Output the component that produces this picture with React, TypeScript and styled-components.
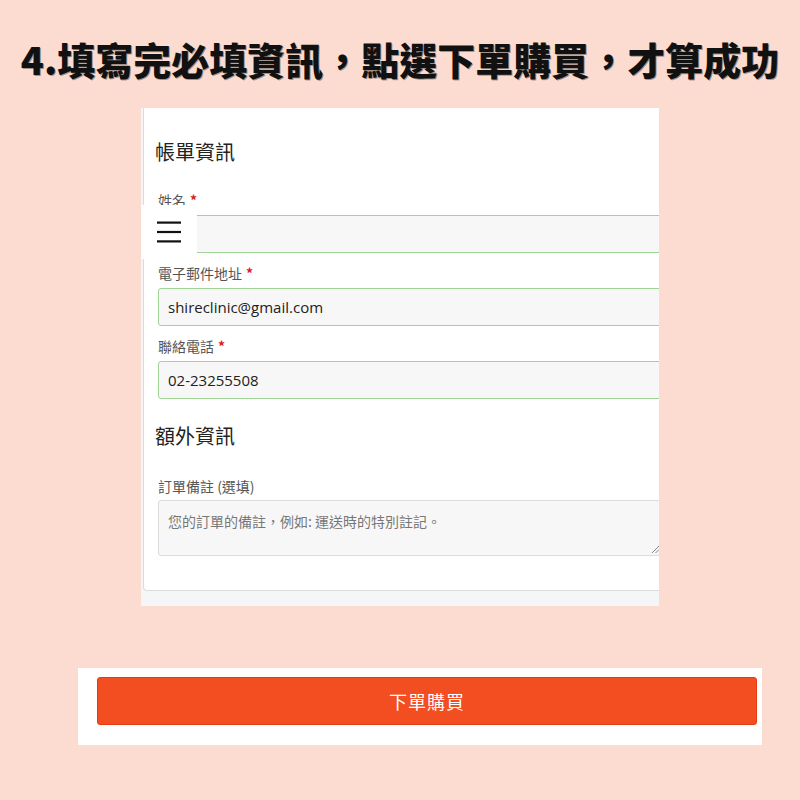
import React from 'react';
import styled, { createGlobalStyle } from 'styled-components';

const GlobalStyle = createGlobalStyle`
  html, body {
    margin: 0;
    padding: 0;
    background: #fcdcd0;
  }
  * {
    box-sizing: border-box;
  }
`

const Page = styled.div`
  width: 800px;
  height: 800px;
  display: flex;
  flex-direction: column;
  align-items: center;
  background: #fcdcd0;
  font-family: "Noto Sans CJK TC", "Noto Sans", sans-serif;
`

const Title = styled.h1`
  margin: 36px 0 0 0;
  height: 46px;
  line-height: 46px;
  font-size: 38px;
  font-weight: 900;
  color: #111;
  white-space: nowrap;
  text-shadow: 1px 1px 0 rgba(0, 0, 0, 0.35);
`

const Shot = styled.div`
  position: relative;
  margin-top: 26px;
  width: 518px;
  height: 498px;
  background: #f5f6f8;
  overflow: hidden;
`

const Card = styled.div`
  width: 524px;
  margin-left: 2px;
  padding: 30px 0 34px 11px;
  background: #fff;
  border-left: 1px solid #dcdcdc;
  border-bottom: 1px solid #dcdcdc;
  border-bottom-left-radius: 4px;
  display: flex;
  flex-direction: column;
`

const SectionTitle = styled.h2<{ $gap: number }>`
  margin: 0 0 ${p => p.$gap}px 0;
  font-size: 20px;
  line-height: 28px;
  font-weight: 400;
  color: #222;
`

const Field = styled.div`
  display: flex;
  flex-direction: column;
  gap: 5px;
  margin-bottom: 10px;
  padding-left: 3px;
`

const Label = styled.label`
  font-size: 14px;
  line-height: 20px;
  color: #555;
`

const Star = styled.span`
  color: #e0191f;
  margin-left: 4px;
  font-weight: 700;
`

const Input = styled.div`
  height: 38px;
  display: flex;
  align-items: center;
  padding: 0 9px;
  background: #f7f7f7;
  border: 1px solid #9fd494;
  border-radius: 3px;
  font-family: "Open Sans", "Noto Sans", sans-serif;
  font-size: 15px;
  color: #222;
`

const TextArea = styled.div`
  position: relative;
  height: 56px;
  padding: 10px 9px;
  background: #f7f7f7;
  border: 1px solid #dcdcdc;
  border-radius: 3px;
  font-size: 14px;
  line-height: 20px;
  color: #777;
`

const ResizeGrip = styled.svg`
  position: absolute;
  right: 7px;
  bottom: 2px;
`

const Hamburger = styled.div`
  position: absolute;
  left: 0;
  top: 97px;
  width: 56px;
  height: 54px;
  background: #fff;
  display: flex;
  align-items: center;
  padding-left: 16px;
`

const ActionBar = styled.div`
  margin-top: 62px;
  margin-left: 40px;
  width: 684px;
  height: 77px;
  background: #fff;
  padding: 9px 5px 0 19px;
`

const BuyButton = styled.button`
  width: 660px;
  height: 48px;
  background: #f24e22;
  border: 1px solid #e43c12;
  border-radius: 3px;
  color: #fff;
  font-family: "Noto Sans CJK TC", sans-serif;
  font-size: 18px;
  letter-spacing: 1px;
  cursor: pointer;
`

function App() {
  return (
    <Page>
      <GlobalStyle />
      <Title>4.填寫完必填資訊，點選下單購買，才算成功</Title>

      <Shot>
        <Card>
          <SectionTitle $gap={24}>帳單資訊</SectionTitle>
          <Field>
            <Label>姓名<Star>*</Star></Label>
            <Input />
          </Field>
          <Field>
            <Label>電子郵件地址<Star>*</Star></Label>
            <Input>shireclinic@gmail.com</Input>
          </Field>
          <Field>
            <Label>聯絡電話<Star>*</Star></Label>
            <Input>02-23255508</Input>
          </Field>
          <SectionTitle $gap={26} style={{ marginTop: 13 }}>額外資訊</SectionTitle>
          <Field style={{ gap: 4, marginBottom: 0 }}>
            <Label>訂單備註 (選填)</Label>
            <TextArea>
              您的訂單的備註，例如: 運送時的特別註記。
              <ResizeGrip width="7" height="7" viewBox="0 0 7 7">
                <line x1="0" y1="7" x2="7" y2="0" stroke="#888" strokeWidth="1" />
                <line x1="3.5" y1="7" x2="7" y2="3.5" stroke="#888" strokeWidth="1" />
              </ResizeGrip>
            </TextArea>
          </Field>
        </Card>
        <Hamburger>
          <svg width="24" height="22" viewBox="0 0 24 22">
            <rect x="0" y="0.5" width="24" height="2.2" fill="#111" />
            <rect x="0" y="9.9" width="24" height="2.2" fill="#111" />
            <rect x="0" y="19.3" width="24" height="2.2" fill="#111" />
          </svg>
        </Hamburger>
      </Shot>

      <ActionBar>
        <BuyButton>下單購買</BuyButton>
      </ActionBar>
    </Page>
  );
}

export default App;
